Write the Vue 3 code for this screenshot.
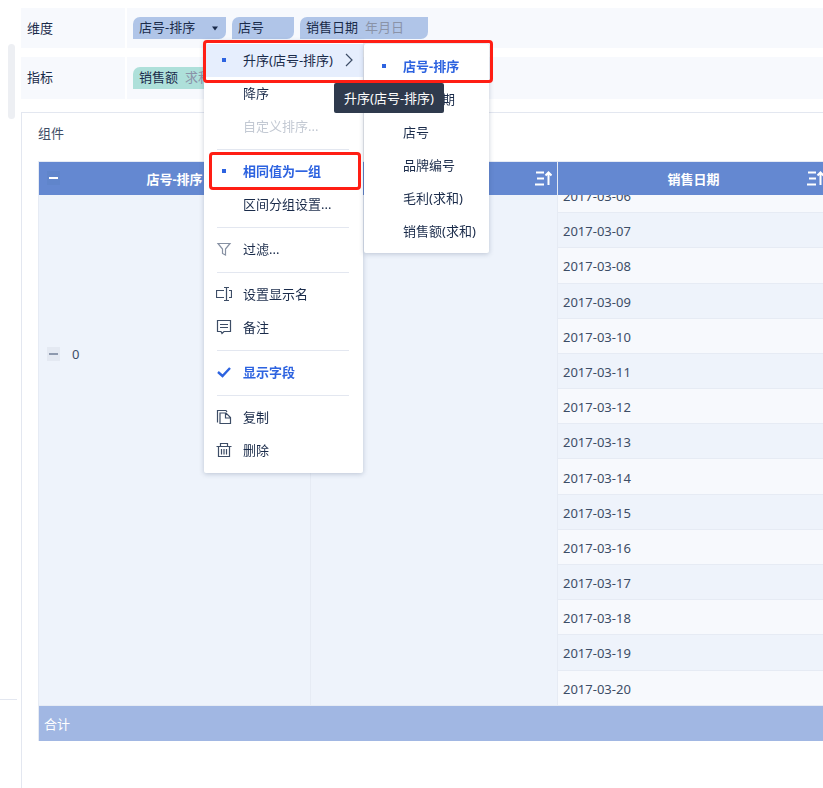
<script setup>
import { ref, onMounted } from 'vue'

const dates = Array.from({ length: 20 }, (_, i) => '2017-03-' + String(i + 1).padStart(2, '0'))

const groups = [
  [
    { text: '升序(店号-排序)', icon: 'dot', open: true },
    { text: '降序' },
    { text: '自定义排序...', disabled: true },
  ],
  [
    { text: '相同值为一组', icon: 'dot', active: true },
    { text: '区间分组设置...' },
  ],
  [{ text: '过滤...', icon: 'filter' }],
  [
    { text: '设置显示名', icon: 'rename' },
    { text: '备注', icon: 'note' },
  ],
  [{ text: '显示字段', icon: 'check', active: true }],
  [
    { text: '复制', icon: 'copy' },
    { text: '删除', icon: 'trash' },
  ],
]

const sortFields = ['店号-排序', '销售日期', '店号', '品牌编号', '毛利(求和)', '销售额(求和)']

const viewport = ref(null)
onMounted(() => {
  viewport.value.scrollTop = viewport.value.scrollHeight
})
</script>

<template>
  <div class="page">
    <aside class="rail">
      <div class="thumb"></div>
      <div class="rail-line"></div>
    </aside>

    <main class="main">
      <section class="shelf">
        <div class="shelf-label">维度</div>
        <div class="shelf-body">
          <button class="pill wide">店号-排序
            <svg class="caret" width="6" height="5" viewBox="0 0 6 5"><path d="M0 0.500h6L3 4.500z" fill="#1a2b4a" /></svg>
          </button>
          <button class="pill short">店号</button>
          <button class="pill long">销售日期<span class="hint">年月日</span></button>
        </div>
      </section>
      <section class="shelf second">
        <div class="shelf-label">指标</div>
        <div class="shelf-body">
          <button class="pill green long">销售额<span class="hint">求和</span></button>
        </div>
      </section>

      <section class="panel">
        <h2 class="title">组件</h2>
        <div ref="viewport" class="viewport">
          <table class="grid">
            <colgroup>
              <col class="c1" />
              <col class="c2" />
              <col class="c3" />
            </colgroup>
            <thead>
              <tr>
                <th>
                  <button class="fold head-fold" aria-label="全部折叠"></button>
                  店号-排序
                </th>
                <th aria-label="店号">
                  <svg class="sort" width="17" height="15" viewBox="0 0 17 15"><path d="M1 1.500h8M2 7.500h7M0 13.500h9M13.500 14V2M10.500 4.500l3-3 3 3" /></svg>
                </th>
                <th>
                  销售日期
                  <svg class="sort" width="17" height="15" viewBox="0 0 17 15"><path d="M1 1.500h8M2 7.500h7M0 13.500h9M13.500 14V2M10.500 4.500l3-3 3 3" /></svg>
                </th>
              </tr>
            </thead>
            <tbody>
              <tr v-for="(d, i) in dates" :key="d">
                <td v-if="i === 0" :rowspan="dates.length" class="group">
                  <div class="group-in"><button class="fold" aria-label="折叠"></button>0</div>
                </td>
                <td v-if="i === 0" :rowspan="dates.length" class="group"></td>
                <td class="date" :class="{ light: i % 2 === 1 }">{{ d }}</td>
              </tr>
            </tbody>
            <tfoot>
              <tr><td colspan="3">合计</td></tr>
            </tfoot>
          </table>
        </div>
      </section>
    </main>

    <div class="menu" role="menu">
      <div v-for="(g, gi) in groups" :key="gi" class="menu-group">
        <button
          v-for="it in g"
          :key="it.text"
          class="item"
          role="menuitem"
          :class="{ open: it.open, active: it.active }"
          :disabled="it.disabled"
        >
          <span class="icon">
            <i v-if="it.icon === 'dot'" class="dot"></i>
            <svg v-else-if="it.icon === 'filter'" width="16" height="16" viewBox="0 0 16 16"><path d="M2 2.500h12L9.500 8v6l-3-1.500V8z" stroke="#8791a3" /></svg>
            <svg v-else-if="it.icon === 'rename'" width="16" height="16" viewBox="0 0 16 16"><path d="M8 4.500H0.500v7H8M13 4.500h2.500v7H13M10.500 1.500v13M8 1.500h5M8 14.500h5" /></svg>
            <svg v-else-if="it.icon === 'note'" width="16" height="16" viewBox="0 0 16 16"><path d="M1.500 1.500h13v11H8l-2 2-1-2H1.500zM4 5.500h8M4 8.500h8" /></svg>
            <svg v-else-if="it.icon === 'check'" width="16" height="16" viewBox="0 0 16 16"><path d="M2 8l4.500 4L14 4" stroke="#2d63e0" stroke-width="2.400" /></svg>
            <svg v-else-if="it.icon === 'copy'" width="16" height="16" viewBox="0 0 16 16"><path d="M1.500 13.500V1.500H10L11 3M4 4h6l4.500 4.500v6H4zM9.500 4v5h5" /></svg>
            <svg v-else-if="it.icon === 'trash'" width="16" height="16" viewBox="0 0 16 16"><path d="M0.500 4.500h15M4.500 4V1.500h7V4M2.500 4.500v10h11v-10M5.500 7v5.500M8 7v5.500M10.500 7v5.500" /></svg>
          </span>
          <span>{{ it.text }}</span>
          <svg v-if="it.open" class="arrow" width="8" height="14" viewBox="0 0 8 14"><path d="M1 1L7 7 1 13" /></svg>
        </button>
      </div>
    </div>

    <div class="menu submenu" role="menu">
      <button
        v-for="(f, i) in sortFields"
        :key="f"
        class="item"
        role="menuitem"
        :class="{ active: i === 0 }"
      >
        <span class="icon"><i v-if="i === 0" class="dot"></i></span>
        <span>{{ f }}</span>
      </button>
    </div>

    <div class="tooltip" role="tooltip">升序(店号-排序)</div>
    <div class="mark mark-sort"></div>
    <div class="mark mark-group"></div>
  </div>
</template>

<style>
body {
  margin: 0;
  background: #fff;
}
</style>

<style scoped>
.page {
  position: relative;
  display: flex;
  min-height: 100vh;
  overflow: hidden;
  font-family: "Noto Sans", "Noto Sans CJK SC", sans-serif;
  font-size: 13px;
  line-height: 20px;
  color: #1a2b4a;
}
button {
  margin: 0;
  padding: 0;
  border: 0;
  background: none;
  font: inherit;
  color: inherit;
  text-align: left;
}
.rail {
  flex: none;
  width: 21px;
}
.thumb {
  width: 7px;
  height: 75px;
  margin: 44px 0 0 8px;
  border-radius: 4px;
  background: #edeff3;
}
.rail-line {
  width: 17px;
  height: 1px;
  margin-top: 580px;
  background: #e3e7f0;
}
.main {
  position: relative;
  z-index: 0;
  flex: 1;
  min-width: 0;
  display: flex;
  flex-direction: column;
  padding-top: 8px;
}
.shelf {
  display: flex;
  gap: 2px;
  height: 40px;
}
.second {
  height: 42px;
  margin-top: 9px;
}
.shelf-label {
  box-sizing: border-box;
  width: 104px;
  padding: 0 6px;
  line-height: 40px;
  background: #f7f9fd;
}
.shelf-body {
  flex: 1;
  display: flex;
  align-items: center;
  gap: 6px;
  padding: 0 6px;
  background: #f7f9fd;
}
.pill {
  box-sizing: border-box;
  display: flex;
  align-items: center;
  height: 22px;
  padding: 0 6px 2px;
  border-radius: 7px 0 7px 0;
  background: #b0c5e8;
}
.wide {
  width: 93px;
}
.short {
  width: 62px;
}
.long {
  width: 128px;
}
.green {
  background: #aee0da;
}
.caret {
  margin: 2px 2px 0 auto;
}
.hint {
  margin-left: 7px;
  color: #8a93a8;
}
.panel {
  flex: 1;
  margin-top: 13px;
  padding-left: 16px;
  border-top: 1px solid #e3e7f0;
  border-left: 1px solid #e3e7f0;
}
.title {
  margin: 10px 0 18px;
  font-size: 13px;
  font-weight: 400;
  line-height: 20px;
  color: #3d4d66;
}
.viewport {
  height: 579px;
  overflow: hidden;
  border-top: 1px solid #e6ebf4;
  border-left: 1px solid #e6ebf4;
}
.grid {
  table-layout: fixed;
  width: 791px;
  height: 772px;
  border-collapse: separate;
  border-spacing: 0;
  color: #3d4d66;
}
.c1 {
  width: 272px;
}
.c2 {
  width: 247px;
}
.c3 {
  width: 272px;
}
th,
td {
  box-sizing: border-box;
  padding: 0 5px;
}
th {
  position: sticky;
  top: 0;
  z-index: 1;
  height: 33px;
  border-right: 1px solid #e6ebf4;
  background: #6488d1;
  color: #fff;
  font-weight: 700;
  text-align: center;
}
.sort {
  position: absolute;
  right: 5px;
  top: 9px;
  fill: none;
  stroke: #fff;
  stroke-width: 2;
}
.group {
  background: #eef3fb;
  border-right: 1px solid #e6ebf4;
  border-bottom: 1px solid #e6ebf4;
}
.group-in {
  display: flex;
  align-items: center;
  gap: 12px;
  padding-left: 3px;
}
.fold {
  display: flex;
  align-items: center;
  justify-content: center;
  width: 13px;
  height: 14px;
  background: #e4e9f2;
}
.fold::before {
  content: "";
  width: 9px;
  height: 2px;
  background: #8d99ae;
}
.head-fold {
  position: absolute;
  left: 8px;
  top: 9px;
  background: #6085cb;
}
.head-fold::before {
  background: #fff;
}
.date {
  padding-top: 2px;
  background: #eef3fb;
  border-bottom: 1px solid #e6ebf4;
}
.light {
  background: #f7f9fd;
}
tfoot td {
  position: sticky;
  bottom: 0;
  height: 35px;
  background: #a1b7e3;
  color: #fff;
}
.menu {
  position: absolute;
  z-index: 1;
  left: 204px;
  top: 41px;
  width: 159px;
  padding: 3px 0 6px;
  border-radius: 2px;
  background: #fff;
  box-shadow: 0 1px 5px rgba(40, 60, 100, 0.25);
}
.submenu {
  left: 364px;
  top: 44px;
  width: 125px;
  padding: 6px 0 5px;
}
.menu-group + .menu-group::before {
  content: "";
  display: block;
  height: 1px;
  margin: 6px 14px 5px 13px;
  background: #e3e7f0;
}
.item {
  box-sizing: border-box;
  display: flex;
  align-items: center;
  width: 100%;
  height: 33px;
  padding-bottom: 2px;
  white-space: nowrap;
}
.item:disabled {
  color: #c3c9d3;
}
.open {
  background: #e6eefd;
}
.active {
  color: #2d63e0;
  font-weight: 700;
}
.icon {
  display: flex;
  align-items: center;
  justify-content: center;
  width: 16px;
  height: 16px;
  margin: 0 11px 0 12px;
}
.icon svg,
.arrow {
  fill: none;
  stroke: #3d4d66;
  stroke-width: 1.2;
}
.dot {
  width: 4px;
  height: 4px;
  background: #2d63e0;
}
.arrow {
  margin-left: 12px;
}
.tooltip {
  position: absolute;
  z-index: 2;
  left: 334px;
  top: 83px;
  padding: 5px 10px;
  border-radius: 2px;
  background: #2f3a4d;
  color: #fff;
  white-space: nowrap;
}
.mark {
  position: absolute;
  z-index: 3;
  box-sizing: border-box;
  border: 3px solid #ff1e14;
  border-radius: 4px;
  pointer-events: none;
}
.mark-sort {
  left: 203px;
  top: 40px;
  width: 290px;
  height: 43px;
}
.mark-group {
  left: 209px;
  top: 152px;
  width: 152px;
  height: 38px;
}
</style>
